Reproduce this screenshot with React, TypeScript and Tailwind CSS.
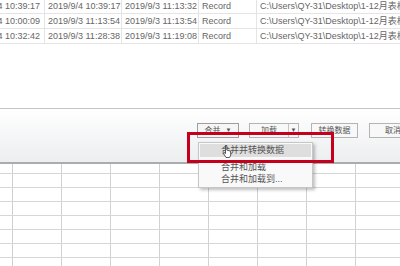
import React from "react";

const rows = [
  ["2019/9/4 10:39:17", "2019/9/4 10:39:17", "2019/9/3 11:13:32"],
  ["2019/9/4 10:00:09", "2019/9/3 11:13:54", "2019/9/3 11:13:54"],
  ["2019/9/4 10:32:42", "2019/9/3 11:28:38", "2019/9/3 11:19:08"],
];

const path = "C:\\Users\\QY-31\\Desktop\\1-12月表格汇总";

const font = { fontFamily: '"Liberation Sans", "Noto Sans CJK SC", sans-serif' };

export default function App() {
  const gridRows = [10, 14, 14, 14, 14, 14, 14, 14];
  const gridCols = 9;
  return (
    <div
      className="relative w-[400px] h-[266px] overflow-hidden bg-white text-[#666]"
      style={font}
    >
      {/* top table */}
      <div className="h-[109px] -mt-[1px]">
        {rows.map((r, i) => (
          <div
            key={i}
            className="flex h-[15px] border-b border-[#e4e4e4] text-[9px] leading-[14px] whitespace-nowrap"
          >
            <div className="w-[45px] shrink-0 flex justify-end pr-[4px] overflow-hidden border-r border-[#e4e4e4]">
              <span>{r[0]}</span>
            </div>
            <div className="w-[77px] shrink-0 pl-[3px] overflow-hidden border-r border-[#e4e4e4]">
              {r[1]}
            </div>
            <div className="w-[77px] shrink-0 pl-[3px] overflow-hidden border-r border-[#e4e4e4]">
              {r[2]}
            </div>
            <div className="w-[58px] shrink-0 pl-[3px] overflow-hidden border-r border-[#e4e4e4]">
              Record
            </div>
            <div className="flex-1 pl-[3px] overflow-hidden">{path}</div>
          </div>
        ))}
      </div>

      {/* footer */}
      <div className="h-[56px] border-t border-[#c4c4c4] border-b-2 border-b-[#a9adaf] bg-gradient-to-b from-[#ffffff] to-[#eceeef] pt-[14px]">
        <div className="flex ml-[197px] gap-[10px] text-[8px] text-[#555] whitespace-nowrap">
          <div className="w-[42px] h-[15px] shrink-0 border border-[#9e9e9e] bg-[#f6f6f6] flex items-center justify-center gap-[5px]">
            <span>合并</span>
            <span className="text-[6px]">▼</span>
          </div>
          <div className="w-[50px] h-[15px] shrink-0 border border-[#b4b4b4] bg-[#f8f8f8] flex">
            <div className="flex-1 flex items-center justify-center border-r border-[#c4c4c4]">加载</div>
            <div className="w-[9px] flex items-center justify-center text-[6px]">▼</div>
          </div>
          <div className="ml-[2px] w-[47px] h-[15px] shrink-0 border border-[#b4b4b4] bg-[#f8f8f8] flex items-center justify-center">
            转换数据
          </div>
          <div className="ml-[1px] w-[48px] h-[15px] shrink-0 border border-[#b4b4b4] bg-[#f8f8f8] flex items-center justify-center">
            取消
          </div>
        </div>
      </div>

      {/* spreadsheet grid */}
      <div>
        {gridRows.map((h, i) => (
          <div key={i} className="flex border-b border-[#d6d6d6]" style={{ height: h }}>
            {Array.from({ length: gridCols }).map((_, j) => (
              <div
                key={j}
                className={
                  j === 0
                    ? "w-[13px] shrink-0 border-r border-[#cfcfcf]"
                    : "w-[49px] shrink-0 border-r border-[#d2d2d2]"
                }
              />
            ))}
          </div>
        ))}
      </div>

      {/* dropdown menu */}
      <div className="absolute left-[198px] top-[142px] w-[115px] h-[46px] bg-[#f9f9f9] border border-[#c6c6c6] shadow-[2px_2px_3px_rgba(0,0,0,0.25)] pt-[1px] px-[1px] text-[9px] text-[#555] whitespace-nowrap">
        <div className="h-[13px] bg-[#dedede] pl-[21px] flex items-center">合并并转换数据</div>
        <div className="h-[5px]" />
        <div className="h-[12px] pl-[21px] flex items-center">合并和加载</div>
        <div className="h-[12px] pl-[21px] flex items-center">合并和加载到...</div>
      </div>

      {/* red highlight box */}
      <div className="absolute left-[187px] top-[132px] w-[147px] h-[31px] border-[3px] border-[#c4001c]" />

      {/* cursor */}
      <svg
        className="absolute left-[223px] top-[145px]"
        width="9"
        height="13"
        viewBox="0 0 9 13"
      >
        <path
          d="M2.5 0.5 L3.8 0.5 L3.8 5 L7.5 6.2 L7.8 10 L6.5 12.5 L3 12.5 L0.5 8.5 L1 7.5 L2.5 8.5 Z"
          fill="#ffffff"
          stroke="#333"
          strokeWidth="0.8"
          strokeLinejoin="round"
        />
      </svg>
    </div>
  );
}
